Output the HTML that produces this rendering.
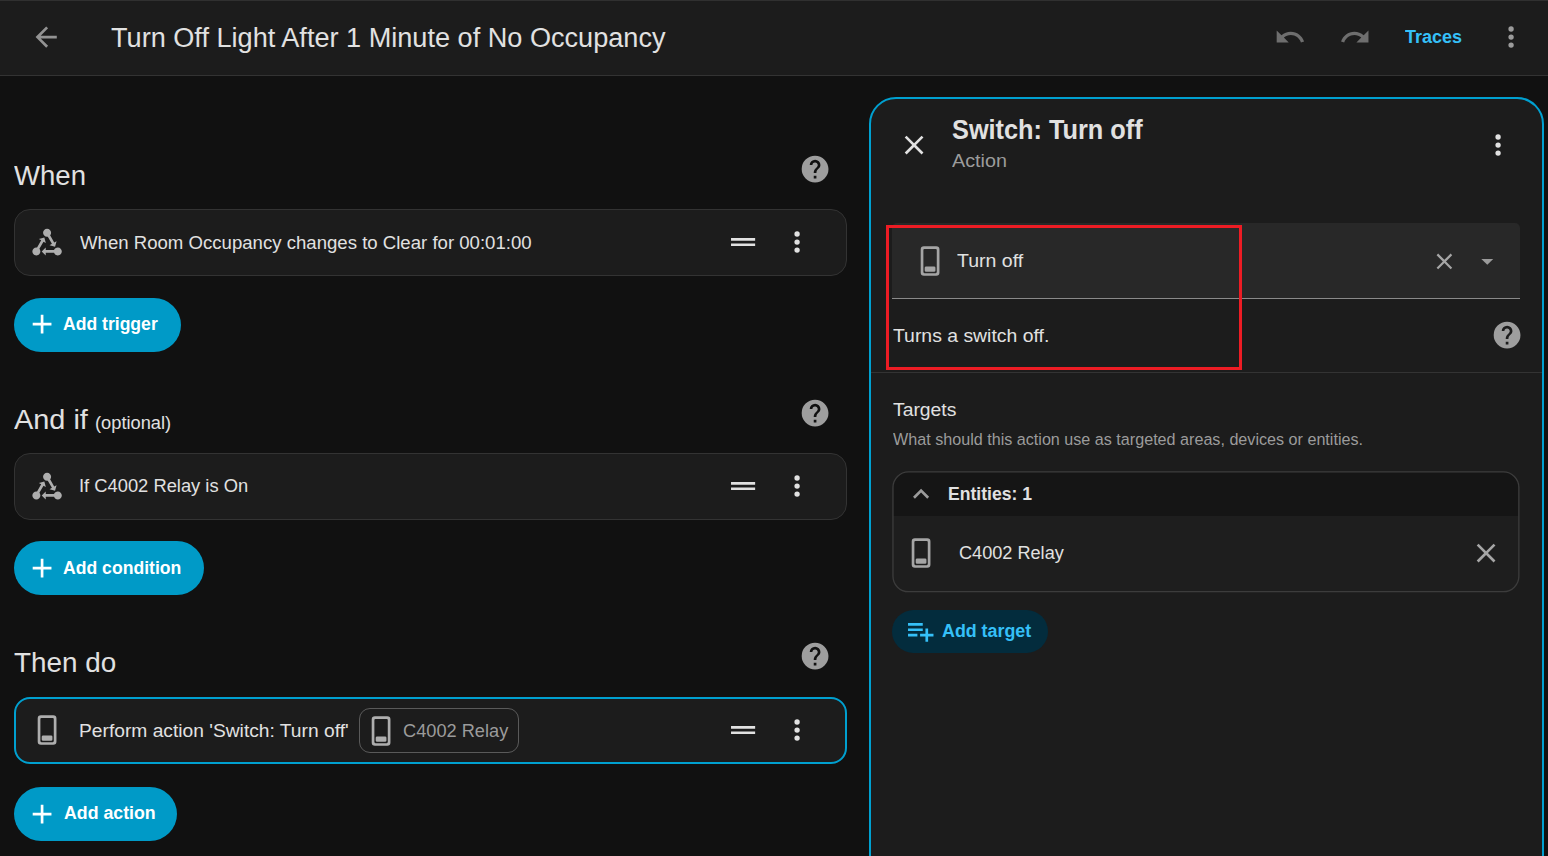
<!DOCTYPE html>
<html lang="en">
<head>
<meta charset="utf-8">
<title>Turn Off Light After 1 Minute of No Occupancy</title>
<style>
html,body{margin:0;padding:0;background:#111111;}
body{width:1548px;height:856px;overflow:hidden;position:relative;
 font-family:"Liberation Sans",sans-serif;-webkit-font-smoothing:antialiased;}
#root{position:absolute;left:0;top:0;width:1548px;height:856px;overflow:hidden;background:#111111;}
.b{position:absolute;box-sizing:border-box;}
.i{position:absolute;display:block;}
.t{position:absolute;white-space:nowrap;line-height:1;transform-origin:0 50%;}
</style>
</head>
<body>
<div id="root">
<div class="b" style="left:0.00px;top:0.00px;width:1548.00px;height:75.00px;background:#1c1c1c"></div>
<div class="b" style="left:0.00px;top:0.00px;width:1548.00px;height:1.00px;background:#303030"></div>
<div class="b" style="left:0.00px;top:75.00px;width:1548.00px;height:1.00px;background:#333333"></div>
<svg class="i" style="left:30px;top:21px;width:32.16px;height:32.16px" viewBox="0 0 24 24"><path fill="#939393" d="M20,11V13H8L13.5,18.5L12.08,19.92L4.16,12L12.08,4.08L13.5,5.5L8,11H20Z"/></svg>
<div class="t" id="title" style="left:110.63px;top:24.82px;font-size:26.80px;color:#e1e1e1;transform:scaleX(1.0117);">Turn Off Light After 1 Minute of No Occupancy</div>
<svg class="i" style="left:1274px;top:21px;width:32.16px;height:32.16px" viewBox="0 0 24 24"><path fill="#6e6e6e" d="M12.5,8C9.85,8 7.45,9 5.6,10.6L2,7V16H11L7.38,12.38C8.77,11.22 10.54,10.5 12.5,10.5C16.04,10.5 19.05,12.81 20.1,16L22.47,15.22C21.08,11.03 17.15,8 12.5,8Z"/></svg>
<svg class="i" style="left:1339px;top:21px;width:32.16px;height:32.16px" viewBox="0 0 24 24"><path fill="#6e6e6e" d="M18.4,10.6C16.55,9 14.15,8 11.5,8C6.85,8 2.92,11.03 1.54,15.22L3.9,16C4.95,12.81 7.95,10.5 11.5,10.5C13.45,10.5 15.23,11.22 16.62,12.38L13,16H22V7L18.4,10.6Z"/></svg>
<div class="t" id="traces" style="left:1405.32px;top:28.11px;font-size:18.76px;color:#35c0f8;font-weight:700;transform:scaleX(0.9611);">Traces</div>
<svg class="i" style="left:1495px;top:21px;width:32.16px;height:32.16px" viewBox="0 0 24 24"><path fill="#9b9b9b" d="M12,16A2,2 0 0,1 14,18A2,2 0 0,1 12,20A2,2 0 0,1 10,18A2,2 0 0,1 12,16M12,10A2,2 0 0,1 14,12A2,2 0 0,1 12,14A2,2 0 0,1 10,12A2,2 0 0,1 12,10M12,4A2,2 0 0,1 14,6A2,2 0 0,1 12,8A2,2 0 0,1 10,6A2,2 0 0,1 12,4Z"/></svg>
<div class="t" id="h1" style="left:14.21px;top:162.00px;font-size:28.00px;color:#e1e1e1;transform:scaleX(0.9836);">When</div>
<svg class="i" style="left:799px;top:153px;width:32.16px;height:32.16px" viewBox="0 0 24 24"><path fill="#9e9e9e" d="M15.07,11.25L14.17,12.17C13.45,12.89 13,13.5 13,15H11V14.5C11,13.39 11.45,12.39 12.17,11.67L13.41,10.41C13.78,10.05 14,9.55 14,9C14,7.89 13.1,7 12,7A2,2 0 0,0 10,9H8A4,4 0 0,1 12,5A4,4 0 0,1 16,9C16,9.88 15.64,10.67 15.07,11.25M13,19H11V17H13M12,2A10,10 0 0,0 2,12A10,10 0 0,0 12,22A10,10 0 0,0 22,12C22,6.47 17.5,2 12,2Z"/></svg>
<div class="b" style="left:14.00px;top:209.00px;width:833.00px;height:67.00px;background:#1c1c1c;border:1px solid #333333;border-radius:16px"></div>
<svg class="i" style="left:31px;top:226px;width:32.16px;height:32.16px" viewBox="0 0 24 24"><path fill="#aeaeae" d="M6.27 17.05C6.72 17.58 7 18.25 7 19C7 20.66 5.66 22 4 22S1 20.66 1 19 2.34 16 4 16C4.18 16 4.36 16 4.53 16.05L7.6 10.69L5.86 9.7L9.95 8.58L11.07 12.67L9.33 11.68L6.27 17.05M20 16C18.7 16 17.6 16.84 17.18 18H11V16L8 19L11 22V20H17.18C17.6 21.16 18.7 22 20 22C21.66 22 23 20.66 23 19S21.66 16 20 16M12 8C12.18 8 12.36 8 12.53 7.95L15.6 13.31L13.86 14.3L17.95 15.42L19.07 11.33L17.33 12.32L14.27 6.95C14.72 6.42 15 5.75 15 5C15 3.34 13.66 2 12 2S9 3.34 9 5 10.34 8 12 8Z"/></svg>
<div class="t" id="c1" style="left:79.67px;top:233.81px;font-size:18.76px;color:#e1e1e1;transform:scaleX(0.9916);">When Room Occupancy changes to Clear for 00:01:00</div>
<svg class="i" style="left:727px;top:226px;width:32.16px;height:32.16px" viewBox="0 0 24 24"><path fill="#e1e1e1" d="M21 11H3V9H21V11M21 13H3V15H21V13Z"/></svg>
<svg class="i" style="left:781px;top:226px;width:32.16px;height:32.16px" viewBox="0 0 24 24"><path fill="#e1e1e1" d="M12,16A2,2 0 0,1 14,18A2,2 0 0,1 12,20A2,2 0 0,1 10,18A2,2 0 0,1 12,16M12,10A2,2 0 0,1 14,12A2,2 0 0,1 12,14A2,2 0 0,1 10,12A2,2 0 0,1 12,10M12,4A2,2 0 0,1 14,6A2,2 0 0,1 12,8A2,2 0 0,1 10,6A2,2 0 0,1 12,4Z"/></svg>
<div class="b" style="left:14.00px;top:298.00px;width:167.00px;height:54.00px;background:#009ac7;border-radius:27px"></div>
<svg class="i" style="left:26px;top:308px;width:32.16px;height:32.16px" viewBox="0 0 24 24"><path fill="#ffffff" d="M19,13H13V19H11V13H5V11H11V5H13V11H19V13Z"/></svg>
<div class="t" id="b1" style="left:63.46px;top:315.00px;font-size:18.76px;color:#ffffff;font-weight:700;transform:scaleX(0.9375);">Add trigger</div>
<div class="t" id="h2" style="left:14.41px;top:406.00px;font-size:28.00px;color:#e1e1e1;transform:scaleX(1.0321);">And if</div>
<div class="t" id="h2o" style="left:94.97px;top:414.01px;font-size:18.76px;color:#e1e1e1;transform:scaleX(0.9734);">(optional)</div>
<svg class="i" style="left:799px;top:397px;width:32.16px;height:32.16px" viewBox="0 0 24 24"><path fill="#9e9e9e" d="M15.07,11.25L14.17,12.17C13.45,12.89 13,13.5 13,15H11V14.5C11,13.39 11.45,12.39 12.17,11.67L13.41,10.41C13.78,10.05 14,9.55 14,9C14,7.89 13.1,7 12,7A2,2 0 0,0 10,9H8A4,4 0 0,1 12,5A4,4 0 0,1 16,9C16,9.88 15.64,10.67 15.07,11.25M13,19H11V17H13M12,2A10,10 0 0,0 2,12A10,10 0 0,0 12,22A10,10 0 0,0 22,12C22,6.47 17.5,2 12,2Z"/></svg>
<div class="b" style="left:14.00px;top:453.00px;width:833.00px;height:67.00px;background:#1c1c1c;border:1px solid #333333;border-radius:16px"></div>
<svg class="i" style="left:31px;top:470px;width:32.16px;height:32.16px" viewBox="0 0 24 24"><path fill="#aeaeae" d="M6.27 17.05C6.72 17.58 7 18.25 7 19C7 20.66 5.66 22 4 22S1 20.66 1 19 2.34 16 4 16C4.18 16 4.36 16 4.53 16.05L7.6 10.69L5.86 9.7L9.95 8.58L11.07 12.67L9.33 11.68L6.27 17.05M20 16C18.7 16 17.6 16.84 17.18 18H11V16L8 19L11 22V20H17.18C17.6 21.16 18.7 22 20 22C21.66 22 23 20.66 23 19S21.66 16 20 16M12 8C12.18 8 12.36 8 12.53 7.95L15.6 13.31L13.86 14.3L17.95 15.42L19.07 11.33L17.33 12.32L14.27 6.95C14.72 6.42 15 5.75 15 5C15 3.34 13.66 2 12 2S9 3.34 9 5 10.34 8 12 8Z"/></svg>
<div class="t" id="c2" style="left:79.04px;top:477.00px;font-size:18.76px;color:#e1e1e1;transform:scaleX(0.9777);">If C4002 Relay is On</div>
<svg class="i" style="left:727px;top:470px;width:32.16px;height:32.16px" viewBox="0 0 24 24"><path fill="#e1e1e1" d="M21 11H3V9H21V11M21 13H3V15H21V13Z"/></svg>
<svg class="i" style="left:781px;top:470px;width:32.16px;height:32.16px" viewBox="0 0 24 24"><path fill="#e1e1e1" d="M12,16A2,2 0 0,1 14,18A2,2 0 0,1 12,20A2,2 0 0,1 10,18A2,2 0 0,1 12,16M12,10A2,2 0 0,1 14,12A2,2 0 0,1 12,14A2,2 0 0,1 10,12A2,2 0 0,1 12,10M12,4A2,2 0 0,1 14,6A2,2 0 0,1 12,8A2,2 0 0,1 10,6A2,2 0 0,1 12,4Z"/></svg>
<div class="b" style="left:14.00px;top:541.00px;width:190.00px;height:54.00px;background:#009ac7;border-radius:27px"></div>
<svg class="i" style="left:26px;top:552px;width:32.16px;height:32.16px" viewBox="0 0 24 24"><path fill="#ffffff" d="M19,13H13V19H11V13H5V11H11V5H13V11H19V13Z"/></svg>
<div class="t" id="b2" style="left:63.46px;top:559.01px;font-size:18.76px;color:#ffffff;font-weight:700;transform:scaleX(0.9386);">Add condition</div>
<div class="t" id="h3" style="left:14.23px;top:649.00px;font-size:28.00px;color:#e1e1e1;transform:scaleX(0.9946);">Then do</div>
<svg class="i" style="left:799px;top:640px;width:32.16px;height:32.16px" viewBox="0 0 24 24"><path fill="#9e9e9e" d="M15.07,11.25L14.17,12.17C13.45,12.89 13,13.5 13,15H11V14.5C11,13.39 11.45,12.39 12.17,11.67L13.41,10.41C13.78,10.05 14,9.55 14,9C14,7.89 13.1,7 12,7A2,2 0 0,0 10,9H8A4,4 0 0,1 12,5A4,4 0 0,1 16,9C16,9.88 15.64,10.67 15.07,11.25M13,19H11V17H13M12,2A10,10 0 0,0 2,12A10,10 0 0,0 12,22A10,10 0 0,0 22,12C22,6.47 17.5,2 12,2Z"/></svg>
<div class="b" style="left:14.00px;top:697.00px;width:833.00px;height:67.00px;background:#1c1c1c;border:2px solid #00a0d0;border-radius:16px"></div>
<svg class="i" style="left:31px;top:714px;width:32.16px;height:32.16px" viewBox="0 0 24 24"><path fill="#aeaeae" d="M7.4,1H16.6A2.4,2.4 0 0,1 19,3.4V20.6A2.4,2.4 0 0,1 16.6,23H7.4A2.4,2.4 0 0,1 5,20.6V3.4A2.4,2.4 0 0,1 7.4,1M7.8,3A0.8,0.8 0 0,0 7,3.8V20.2A0.8,0.8 0 0,0 7.8,21H16.2A0.8,0.8 0 0,0 17,20.2V3.8A0.8,0.8 0 0,0 16.2,3H7.8M9,16H15A1,1 0 0,1 16,17V19A1,1 0 0,1 15,20H9A1,1 0 0,1 8,19V17A1,1 0 0,1 9,16Z"/></svg>
<div class="t" id="c3" style="left:78.57px;top:722.01px;font-size:18.76px;color:#e1e1e1;transform:scaleX(1.0246);">Perform action 'Switch: Turn off'</div>
<div class="b" style="left:359.00px;top:708.00px;width:160.00px;height:45.00px;border:1px solid #5a5a5a;border-radius:11px"></div>
<svg class="i" style="left:365px;top:715px;width:32.16px;height:32.16px" viewBox="0 0 24 24"><path fill="#aeaeae" d="M7.4,1H16.6A2.4,2.4 0 0,1 19,3.4V20.6A2.4,2.4 0 0,1 16.6,23H7.4A2.4,2.4 0 0,1 5,20.6V3.4A2.4,2.4 0 0,1 7.4,1M7.8,3A0.8,0.8 0 0,0 7,3.8V20.2A0.8,0.8 0 0,0 7.8,21H16.2A0.8,0.8 0 0,0 17,20.2V3.8A0.8,0.8 0 0,0 16.2,3H7.8M9,16H15A1,1 0 0,1 16,17V19A1,1 0 0,1 15,20H9A1,1 0 0,1 8,19V17A1,1 0 0,1 9,16Z"/></svg>
<div class="t" id="chip" style="left:402.77px;top:722.21px;font-size:18.76px;color:#9b9b9b;transform:scaleX(0.9709);">C4002 Relay</div>
<svg class="i" style="left:727px;top:714px;width:32.16px;height:32.16px" viewBox="0 0 24 24"><path fill="#e1e1e1" d="M21 11H3V9H21V11M21 13H3V15H21V13Z"/></svg>
<svg class="i" style="left:781px;top:714px;width:32.16px;height:32.16px" viewBox="0 0 24 24"><path fill="#e1e1e1" d="M12,16A2,2 0 0,1 14,18A2,2 0 0,1 12,20A2,2 0 0,1 10,18A2,2 0 0,1 12,16M12,10A2,2 0 0,1 14,12A2,2 0 0,1 12,14A2,2 0 0,1 10,12A2,2 0 0,1 12,10M12,4A2,2 0 0,1 14,6A2,2 0 0,1 12,8A2,2 0 0,1 10,6A2,2 0 0,1 12,4Z"/></svg>
<div class="b" style="left:14.00px;top:787.00px;width:163.00px;height:54.00px;background:#009ac7;border-radius:27px"></div>
<svg class="i" style="left:26px;top:798px;width:32.16px;height:32.16px" viewBox="0 0 24 24"><path fill="#ffffff" d="M19,13H13V19H11V13H5V11H11V5H13V11H19V13Z"/></svg>
<div class="t" id="b3" style="left:63.79px;top:804.01px;font-size:18.76px;color:#ffffff;font-weight:700;transform:scaleX(0.9462);">Add action</div>
<div class="b" style="left:869.00px;top:97.00px;width:675.00px;height:803.00px;background:#1c1c1c;border:2px solid #00a0d0;border-radius:27px"></div>
<svg class="i" style="left:898px;top:129px;width:32.16px;height:32.16px" viewBox="0 0 24 24"><path fill="#e1e1e1" d="M19,6.41L17.59,5L12,10.59L6.41,5L5,6.41L10.59,12L5,17.59L6.41,19L12,13.41L17.59,19L19,17.59L13.41,12L19,6.41Z"/></svg>
<div class="t" id="ptitle" style="left:951.71px;top:117.00px;font-size:26.80px;color:#e1e1e1;font-weight:700;transform:scaleX(0.9442);">Switch: Turn off</div>
<div class="t" id="psub" style="left:952.01px;top:152.11px;font-size:18.76px;color:#9b9b9b;transform:scaleX(1.0545);">Action</div>
<svg class="i" style="left:1482px;top:129px;width:32.16px;height:32.16px" viewBox="0 0 24 24"><path fill="#e1e1e1" d="M12,16A2,2 0 0,1 14,18A2,2 0 0,1 12,20A2,2 0 0,1 10,18A2,2 0 0,1 12,16M12,10A2,2 0 0,1 14,12A2,2 0 0,1 12,14A2,2 0 0,1 10,12A2,2 0 0,1 12,10M12,4A2,2 0 0,1 14,6A2,2 0 0,1 12,8A2,2 0 0,1 10,6A2,2 0 0,1 12,4Z"/></svg>
<div class="b" style="left:892.00px;top:223.00px;width:628.00px;height:75.00px;background:#282828;border-radius:5px 5px 0 0"></div>
<div class="b" style="left:892.00px;top:298.00px;width:628.00px;height:1.00px;background:#8a8a8a"></div>
<svg class="i" style="left:914px;top:245px;width:32.16px;height:32.16px" viewBox="0 0 24 24"><path fill="#a5a5a5" d="M7.4,1H16.6A2.4,2.4 0 0,1 19,3.4V20.6A2.4,2.4 0 0,1 16.6,23H7.4A2.4,2.4 0 0,1 5,20.6V3.4A2.4,2.4 0 0,1 7.4,1M7.8,3A0.8,0.8 0 0,0 7,3.8V20.2A0.8,0.8 0 0,0 7.8,21H16.2A0.8,0.8 0 0,0 17,20.2V3.8A0.8,0.8 0 0,0 16.2,3H7.8M9,16H15A1,1 0 0,1 16,17V19A1,1 0 0,1 15,20H9A1,1 0 0,1 8,19V17A1,1 0 0,1 9,16Z"/></svg>
<div class="t" id="field" style="left:957.48px;top:251.72px;font-size:18.76px;color:#e1e1e1;transform:scaleX(1.0408);">Turn off</div>
<svg class="i" style="left:1431px;top:248px;width:26.80px;height:26.80px" viewBox="0 0 24 24"><path fill="#a6a6a6" d="M19,6.41L17.59,5L12,10.59L6.41,5L5,6.41L10.59,12L5,17.59L6.41,19L12,13.41L17.59,19L19,17.59L13.41,12L19,6.41Z"/></svg>
<svg class="i" style="left:1473.30px;top:246.80px;width:28.60px;height:28.60px" viewBox="0 0 24 24"><path fill="#9b9b9b" d="M7,10L12,15L17,10H7Z"/></svg>
<div class="t" id="desc" style="left:892.70px;top:327.11px;font-size:18.76px;color:#e1e1e1;transform:scaleX(1.0342);">Turns a switch off.</div>
<svg class="i" style="left:1491px;top:319px;width:32.16px;height:32.16px" viewBox="0 0 24 24"><path fill="#9e9e9e" d="M15.07,11.25L14.17,12.17C13.45,12.89 13,13.5 13,15H11V14.5C11,13.39 11.45,12.39 12.17,11.67L13.41,10.41C13.78,10.05 14,9.55 14,9C14,7.89 13.1,7 12,7A2,2 0 0,0 10,9H8A4,4 0 0,1 12,5A4,4 0 0,1 16,9C16,9.88 15.64,10.67 15.07,11.25M13,19H11V17H13M12,2A10,10 0 0,0 2,12A10,10 0 0,0 12,22A10,10 0 0,0 22,12C22,6.47 17.5,2 12,2Z"/></svg>
<div class="b" style="left:886.00px;top:225.00px;width:356.00px;height:145.00px;border:3px solid #ed1c24"></div>
<div class="b" style="left:871.00px;top:372.00px;width:671.00px;height:1.00px;background:#333333"></div>
<div class="t" id="targets" style="left:892.90px;top:401.11px;font-size:18.76px;color:#e1e1e1;transform:scaleX(1.0308);">Targets</div>
<div class="t" id="tdesc" style="left:892.95px;top:430.60px;font-size:16.08px;color:#9b9b9b;transform:scaleX(1.0037);">What should this action use as targeted areas, devices or entities.</div>
<svg class="i" style="left:880px;top:460px;width:660px;height:145px" viewBox="880 460 660 145"><defs><clipPath id="ec"><rect x="892.97" y="471.9" width="625.9" height="119.8" rx="15.5"/></clipPath></defs><rect x="892.97" y="471.9" width="625.9" height="119.8" rx="15.5" fill="#1e1e1e"/><rect x="890" y="470" width="632" height="46" fill="#151515" clip-path="url(#ec)"/><rect x="892.97" y="471.9" width="625.9" height="119.8" rx="15.5" fill="none" stroke="#3c3c3c" stroke-width="1.34"/></svg>
<svg class="i" style="left:905px;top:478px;width:32.16px;height:32.16px" viewBox="0 0 24 24"><path fill="#9b9b9b" d="M7.41,15.41L12,10.83L16.59,15.41L18,14L12,8L6,14L7.41,15.41Z"/></svg>
<div class="t" id="ent" style="left:947.77px;top:485.01px;font-size:18.76px;color:#e1e1e1;font-weight:700;transform:scaleX(0.9365);">Entities: 1</div>
<svg class="i" style="left:905px;top:537px;width:32.16px;height:32.16px" viewBox="0 0 24 24"><path fill="#a5a5a5" d="M7.4,1H16.6A2.4,2.4 0 0,1 19,3.4V20.6A2.4,2.4 0 0,1 16.6,23H7.4A2.4,2.4 0 0,1 5,20.6V3.4A2.4,2.4 0 0,1 7.4,1M7.8,3A0.8,0.8 0 0,0 7,3.8V20.2A0.8,0.8 0 0,0 7.8,21H16.2A0.8,0.8 0 0,0 17,20.2V3.8A0.8,0.8 0 0,0 16.2,3H7.8M9,16H15A1,1 0 0,1 16,17V19A1,1 0 0,1 15,20H9A1,1 0 0,1 8,19V17A1,1 0 0,1 9,16Z"/></svg>
<div class="t" id="row" style="left:958.76px;top:543.91px;font-size:18.76px;color:#e1e1e1;transform:scaleX(0.9667);">C4002 Relay</div>
<svg class="i" style="left:1470px;top:537px;width:32.16px;height:32.16px" viewBox="0 0 24 24"><path fill="#a6a6a6" d="M19,6.41L17.59,5L12,10.59L6.41,5L5,6.41L10.59,12L5,17.59L6.41,19L12,13.41L17.59,19L19,17.59L13.41,12L19,6.41Z"/></svg>
<div class="b" style="left:892.00px;top:610.00px;width:156.00px;height:43.00px;background:#032c3d;border-radius:22px"></div>
<svg class="i" style="left:904px;top:615px;width:32.16px;height:32.16px" viewBox="0 0 24 24"><path fill="#35c0f8" d="M3 16H10V14H3M18 14V10H16V14H12V16H16V20H18V16H22V14M14 6H3V8H14M14 10H3V12H14V10Z"/></svg>
<div class="t" id="b4" style="left:941.89px;top:622.11px;font-size:18.76px;color:#35c0f8;font-weight:700;transform:scaleX(0.9512);">Add target</div>
</div>
</body>
</html>
